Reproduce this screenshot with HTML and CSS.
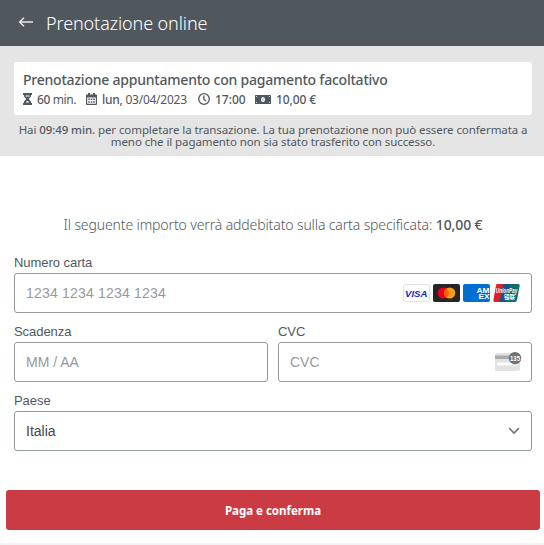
FILE: index.html
```html
<!DOCTYPE html>
<html lang="it">
<head>
  <meta charset="UTF-8">
  <meta name="viewport" content="width=device-width, initial-scale=1.0">
  <title>Prenotazione online</title>
  <link rel="stylesheet" href="styles.css">
</head>
<body>
  <header class="topbar">
    <svg class="back" width="16" height="12" viewBox="0 0 16 12" fill="none" stroke="#e5e5e5" stroke-width="1.5"><path d="M15 6H2M6 1.8L1.600 6L6 10.200"/></svg>
    <h1>Prenotazione online</h1>
  </header>

  <section class="summary">
    <div class="card">
      <h2>Prenotazione appuntamento con pagamento facoltativo</h2>
      <div class="details">
        <div class="detail duration">
          <svg width="9" height="12" viewBox="0 0 9 12" fill="#50585e"><path d="M0 0h9v2H0zM0 10h9v2H0z"/><path d="M1 1h7v2.500L5.800 6L8 8.500V11H1V8.500L3.200 6L1 3.500z"/><path d="M2.500 2.500h4v1h-4zM3 9L4.500 7.700L6 9V9.500H3z" fill="#fff"/></svg>
          <span><b>60</b> min.</span>
        </div>
        <div class="detail date">
          <svg width="11" height="12" viewBox="0 0 11 12" fill="#50585e"><path fill-rule="evenodd" d="M2 0h2v1.500h3V0h2v1.500h1q1 0 1 1V11q0 1-1 1H1q-1 0-1-1V2.500q0-1 1-1h1zM1.200 4.500V10.800h8.600V4.500z"/><path d="M2.200 5.500h1.600v1.500H2.200zM4.700 5.500h1.600v1.500H4.700zM7.200 5.500h1.600v1.500H7.200zM2.200 8.300h1.600v1.500H2.200zM4.700 8.300h1.600v1.500H4.700zM7.200 8.300h1.600v1.500H7.200z"/></svg>
          <span><b>lun,</b> 03/04/2023</span>
        </div>
        <div class="detail time">
          <svg width="12" height="12" viewBox="0 0 12 12" fill="none" stroke="#50585e" stroke-width="1.3"><circle cx="6" cy="6" r="5.300"/><path d="M5.800 2.500V6.300L8 8"/></svg>
          <span><b>17:00</b></span>
        </div>
        <div class="detail price">
          <svg width="16" height="9" viewBox="0 0 16 9"><rect width="16" height="9" rx=".5" fill="#50585e"/><ellipse cx="8" cy="4.500" rx="2" ry="2.600" fill="#fff"/><path d="M7.700 3.500h.6v2h-.6z" fill="#50585e"/><path d="M1 1h1.300L1 2.300zM15 1v1.300L13.700 1zM1 8V6.700L2.300 8zM15 8h-1.300L15 6.700z" fill="#fff"/></svg>
          <span><b>10,00 €</b></span>
        </div>
      </div>
    </div>
    <p class="notice">Hai <b>09:49 min.</b> per completare la transazione. La tua prenotazione non può essere confermata a<br>meno che il pagamento non sia stato trasferito con successo.</p>
  </section>

  <form class="payment">
    <p class="amount">Il seguente importo verrà addebitato sulla carta specificata: <b>10,00 €</b></p>

    <div class="form-group">
      <label for="number">Numero carta</label>
      <div class="field">
        <input type="text" id="number" placeholder="1234 1234 1234 1234">
        <div class="brands">
          <svg width="27" height="18" viewBox="0 0 27 18"><rect x=".5" y=".5" width="26" height="17" rx="1.500" fill="#fff" stroke="#e2e2e5"/><text class="visa" x="2" y="12.800" textLength="22.500" lengthAdjust="spacingAndGlyphs">VISA</text></svg>
          <svg width="27" height="18" viewBox="0 0 27 18"><rect width="27" height="18" rx="2" fill="#252525"/><circle cx="10.300" cy="9" r="5.600" fill="#eb001b"/><circle cx="16.700" cy="9" r="5.600" fill="#f79e1b"/><path d="M13.500 4.400a5.600 5.600 0 0 1 0 9.200a5.600 5.600 0 0 1 0-9.200" fill="#ff5f00"/></svg>
          <svg width="27" height="18" viewBox="0 0 27 18"><rect width="27" height="18" rx="2" fill="#016fd0"/><text class="amex" x="13.500" y="8.800" textLength="13" lengthAdjust="spacingAndGlyphs">AM</text><text class="amex" x="15.500" y="15.300" textLength="11.200" lengthAdjust="spacingAndGlyphs">EX</text></svg>
          <svg width="27" height="18" viewBox="0 0 27 18"><path d="M4 0h8L8 18H2Q0 18 .4 16L3 1.500Q3.200 0 4 0z" fill="#d9222a"/><path d="M10 0h8l-4 18H6.500z" fill="#1d4f8c"/><path d="M17 0h8q2 0 1.600 2L24 16q-.4 2-2 2h-9z" fill="#0b7069"/><text class="union" x="2.800" y="9" textLength="21.500" lengthAdjust="spacingAndGlyphs">UnionPay</text><text class="union-cjk" x="11" y="15" textLength="11" lengthAdjust="spacingAndGlyphs">银联</text></svg>
        </div>
      </div>
    </div>

    <div class="row">
      <div class="form-group">
        <label for="expiry">Scadenza</label>
        <div class="field">
          <input type="text" id="expiry" placeholder="MM / AA">
        </div>
      </div>
      <div class="form-group">
        <label for="cvc">CVC</label>
        <div class="field">
          <input type="text" id="cvc" placeholder="CVC">
          <svg class="cvc-icon" width="27" height="20" viewBox="0 0 27 20"><rect y="1" width="25" height="18" rx="2" fill="#e0e2e3"/><path d="M0 3.500h25V7H0z" fill="#aaabad"/><path d="M2 10.500h20v3H2z" fill="#fff"/><circle cx="20" cy="6.200" r="6.200" fill="#6d7273"/><text class="digits" x="15" y="8.700" textLength="10" lengthAdjust="spacingAndGlyphs">135</text></svg>
        </div>
      </div>
    </div>

    <div class="form-group">
      <label for="country">Paese</label>
      <div class="field">
        <select id="country">
          <option>Italia</option>
        </select>
        <svg class="chevron" width="12" height="8" viewBox="0 0 12 8" fill="none" stroke="#6d7273" stroke-width="1.600" stroke-linecap="round"><path d="M1.500 1.500L6 6L10.500 1.500"/></svg>
      </div>
    </div>

    <button type="submit">Paga e conferma</button>
  </form>
  <footer class="bottom"></footer>
</body>
</html>
```
FILE: styles.css
```css
* {
  box-sizing: border-box;
}
body {
  display: flex;
  flex-direction: column;
  margin: 0;
  height: 545px;
  overflow: hidden;
  background: #fff;
  color: #50585e;
  font-family: "Noto Sans", "Open Sans", sans-serif;
  font-size: 12px;
}
h1, h2, p {
  margin: 0;
}
b {
  font-weight: 500;
}
svg {
  display: block;
  flex: none;
}
.topbar {
  display: flex;
  align-items: center;
  gap: 12px;
  height: 46px;
  padding-left: 18px;
  background: #50585e;
  color: #fff;
}
.back {
  margin-top: -2px;
}
.topbar h1 {
  margin-top: -1px;
  font-size: 18px;
  font-weight: 300;
  letter-spacing: -0.1px;
  white-space: nowrap;
}
.summary {
  height: 110px;
  padding: 16px 12px 0 14px;
  background: #e5e5e5;
}
.card {
  height: 53px;
  padding: 8px 9px 0;
  background: #fff;
  border-radius: 3px;
  white-space: nowrap;
}
.card h2 {
  font-size: 14px;
  line-height: 20px;
  font-weight: 500;
  letter-spacing: -0.22px;
}
.details {
  display: flex;
  height: 18px;
}
.detail {
  display: flex;
  align-items: center;
  gap: 5px;
}
.duration {
  width: 63px;
  letter-spacing: -0.4px;
}
.date {
  width: 112px;
  letter-spacing: -0.25px;
}
.time {
  width: 57px;
}
.price {
  letter-spacing: -0.1px;
}
.notice {
  margin-top: 9px;
  text-align: center;
  font-size: 11.5px;
  line-height: 12px;
  letter-spacing: -0.09px;
  white-space: nowrap;
}
.payment {
  flex: none;
  height: 387px;
  padding: 58px 12px 0 14px;
}
.amount {
  height: 22px;
  margin-bottom: 18px;
  text-align: center;
  font-size: 14px;
  line-height: 22px;
  font-weight: 300;
  letter-spacing: -0.12px;
  white-space: nowrap;
}
.form-group {
  flex: 1;
  height: 69px;
}
.row {
  display: flex;
  gap: 10px;
}
label {
  display: block;
  height: 19px;
  padding-top: 1px;
  font: 13px/15px "Liberation Sans", Arial, sans-serif;
  letter-spacing: -0.05px;
}
.field {
  display: flex;
  align-items: center;
  height: 40px;
  padding: 0 11px;
  border: 1px solid #939a9c;
  border-radius: 3px;
}
input, select {
  flex: 1;
  min-width: 0;
  padding: 0;
  border: 0;
  outline: 0;
  background: none;
  color: #40484e;
  font: 14px "Liberation Sans", Arial, sans-serif;
  appearance: none;
}
input::placeholder {
  color: #969a9c;
}
#number {
  letter-spacing: 0.2px;
}
.brands {
  display: flex;
  gap: 3px;
}
.cvc-icon {
  margin-right: -2px;
}
.visa {
  fill: #1a1fc4;
  font: italic bold 9.5px "Liberation Sans", sans-serif;
}
.amex {
  fill: #fff;
  font: bold 8px "Liberation Sans", sans-serif;
}
.union {
  fill: #fff;
  font: italic bold 7px "Liberation Sans", sans-serif;
}
.union-cjk {
  fill: #fff;
  font: bold 6px "Noto Sans CJK SC", sans-serif;
}
.digits {
  fill: #fff;
  font: bold 6.5px "Liberation Sans", sans-serif;
}
button {
  display: block;
  width: 534px;
  height: 40px;
  margin: 29px 0 0 -8px;
  padding: 0;
  border: 0;
  border-radius: 3px;
  background: #ca3b43;
  color: #fff;
  font: 700 11.5px "Noto Sans", "Open Sans", sans-serif;
  cursor: pointer;
}
.bottom {
  height: 2px;
  background: #f3f3f3;
}
```
